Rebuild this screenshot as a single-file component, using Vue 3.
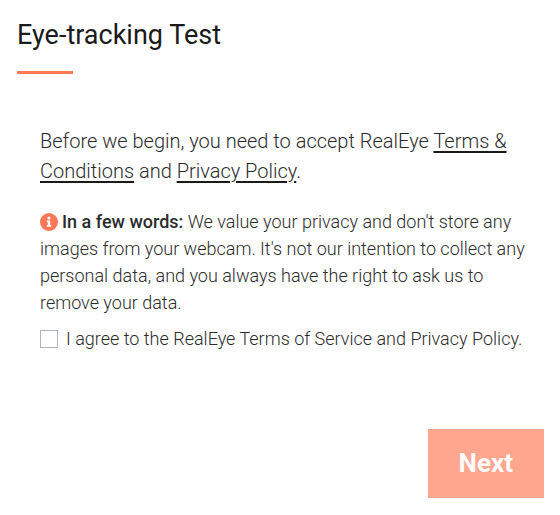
<script setup>
import { ref } from 'vue'

const agreed = ref(false)
</script>

<template>
  <main class="page">
    <header class="heading">
      <h1>Eye-tracking Test</h1>
      <div class="accent"></div>
    </header>
    <section class="content">
      <p class="intro">
        Before we begin, you need to accept RealEye <a href="#terms">Terms &amp;<br />Conditions</a> and
        <a href="#privacy">Privacy Policy</a>.
      </p>
      <p class="note">
        <svg class="info" viewBox="0 0 18 18" aria-hidden="true">
          <circle cx="9" cy="9" r="9" fill="#ff7757" />
          <circle cx="9" cy="5" r="1.6" fill="#fff" />
          <path d="M6.8 7.6H10.2V12H11.2V13.7H6.8V12H7.8V9.3H6.8Z" fill="#fff" />
        </svg>
        <strong>In a few words:</strong> We value your privacy and don't store any<br />
        images from your webcam. It's not our intention to collect any<br />
        personal data, and you always have the right to ask us to<br />
        remove your data.
      </p>
      <label class="agree">
        <input v-model="agreed" type="checkbox" />
        <span>I agree to the RealEye Terms of Service and Privacy Policy.</span>
      </label>
    </section>
    <footer class="actions">
      <button type="button" class="next">Next</button>
    </footer>
  </main>
</template>

<style>
body {
  background: #fff;
}
</style>

<style scoped>
.page {
  padding: 17px 16px 16px 17px;
  font-family: Roboto, "Liberation Sans", sans-serif;
  color: #2b2b2b;
}
h1 {
  margin: 0;
  font-size: 27px;
  line-height: 36px;
  font-weight: 400;
  color: #1a1a1a;
}
.accent {
  width: 56px;
  height: 3px;
  margin-top: 18px;
  background: #ff7757;
}
.content {
  padding: 52px 0 0 23px;
}
p {
  margin: 0;
  white-space: nowrap;
}
.intro {
  font-size: 20px;
  line-height: 30px;
  font-weight: 300;
}
.intro a {
  color: inherit;
  text-decoration-color: #1a1a1a;
  text-decoration-thickness: 2px;
  text-underline-offset: 3px;
}
.note {
  margin-top: 22px;
  font-size: 18px;
  line-height: 27px;
  font-weight: 300;
}
.note strong {
  font-weight: 500;
}
.info {
  width: 18px;
  height: 18px;
  margin-right: 4px;
  vertical-align: -3px;
}
.agree {
  display: flex;
  align-items: center;
  gap: 8px;
  margin-top: 9px;
  font-size: 18px;
  line-height: 27px;
  font-weight: 300;
  white-space: nowrap;
}
.agree input {
  appearance: none;
  flex: none;
  width: 18px;
  height: 18px;
  margin: 0;
  border: 1px solid #adb5bd;
  background: #fff;
}
.agree input:checked {
  background: #ff7757;
}
.actions {
  display: flex;
  justify-content: flex-end;
  margin-top: 77px;
}
.next {
  padding: 16px 31px;
  border: 0;
  background: #ffa68f;
  color: #fafafa;
  font-family: inherit;
  font-size: 26px;
  line-height: 37px;
  font-weight: 700;
}
</style>
